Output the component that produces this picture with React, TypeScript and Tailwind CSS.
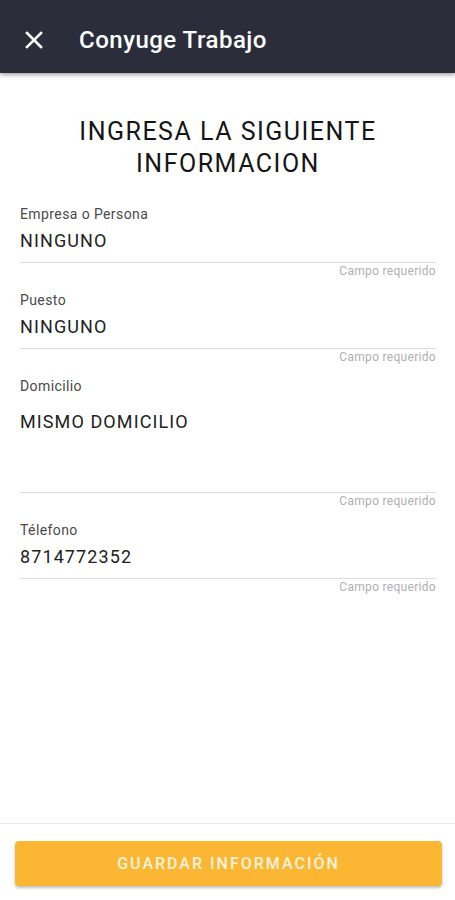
import React from 'react';

interface Field { label: string; value: string; tall?: boolean }

const fields: Field[] = [
  { label: 'Empresa o Persona', value: 'NINGUNO' },
  { label: 'Puesto', value: 'NINGUNO' },
  { label: 'Domicilio', value: 'MISMO DOMICILIO', tall: true },
  { label: 'Télefono', value: '8714772352' },
];

function FormField({ label, value, tall }: Field) {
  return (
    <div className="mb-[14px]">
      <div className="text-[14px] leading-4 tracking-[0.4px] text-[#4a4a4a]">{label}</div>
      {tall ? (
        <div className="h-[99px] pt-[16px] border-b border-[#dcdcdc] text-[18px] leading-6 tracking-[1.1px] text-[#222]">{value}</div>
      ) : (
        <div className="h-[41px] pt-[7px] border-b border-[#dcdcdc] text-[18px] leading-6 tracking-[1.1px] text-[#222]">{value}</div>
      )}
      <div className="text-right text-[12px] leading-[14px] tracking-[0.3px] text-[#b0b0b0] pt-[1px]">Campo requerido</div>
    </div>
  );
}

export default function App() {
  return (
    <div className="min-h-screen flex flex-col bg-white" style={{ fontFamily: 'Roboto, "Noto Sans", sans-serif' }}>
      <header className="h-[73px] pt-[6px] bg-[#2b2d3b] flex items-center shadow-[0_2px_4px_rgba(0,0,0,0.35)] relative z-10">
        <svg className="ml-[24px] w-[20px] h-[20px]" viewBox="0 0 20 20" fill="none" stroke="white" strokeWidth="2.6" strokeLinecap="square">
          <path d="M3 3 L17 17 M17 3 L3 17" />
        </svg>
        <h1 className="ml-[35px] text-white text-[24px] font-medium tracking-[0.5px]">Conyuge Trabajo</h1>
      </header>

      <main className="flex-1 px-[20px] pr-[19px]">
        <h2 className="mt-[43px] mb-[26px] text-center text-[25px] leading-8 text-[#151515] tracking-[1.5px]">
          INGRESA LA SIGUIENTE
          <br />
          INFORMACION
        </h2>
        {fields.map((f) => (
          <FormField key={f.label} {...f} />
        ))}
      </main>

      <footer className="border-t border-[#e8e8e8] pt-[17px] pb-[14px] pl-[15px] pr-[13px]">
        <button className="w-full h-[45px] rounded-[4px] bg-[#fbb734] text-[#fdf3dc] text-[16px] font-medium tracking-[2px] shadow-[0_2px_3px_rgba(0,0,0,0.25)]">
          GUARDAR INFORMACIÓN
        </button>
      </footer>
    </div>
  );
}
